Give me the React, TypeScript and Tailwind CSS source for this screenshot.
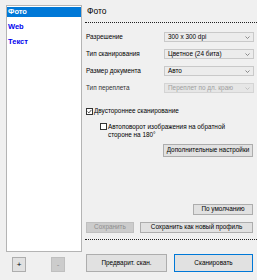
const profiles = ["Фото", "Web", "Текст"];

const settings = [
  { label: "Разрешение", value: "300 x 300 dpi", disabled: false },
  { label: "Тип сканирования", value: "Цветное (24 бита)", disabled: false },
  { label: "Размер документа", value: "Авто", disabled: false },
  { label: "Тип переплета", value: "Переплет по дл. краю", disabled: true },
];

function Chevron({ color }: { color: string }) {
  return (
    <svg width="5" height="3" viewBox="0 0 5 3" className="shrink-0">
      <path d="M0.5 0.5L2.5 2.5L4.5 0.5" fill="none" stroke={color} strokeWidth="0.8" />
    </svg>
  );
}

function Combo({ value, disabled }: { value: string; disabled: boolean }) {
  return (
    <div
      className={`w-[90px] h-[10px] flex items-center justify-between pl-[3px] pr-[3px] border ${
        disabled ? "bg-[#e6e6e6] border-[#d4d4d4] text-[#a0a0a0]" : "bg-[#ececec] border-[#c9c9c9] text-black"
      }`}
    >
      <span className="leading-none">{value}</span>
      <Chevron color={disabled ? "#b8b8b8" : "#707070"} />
    </div>
  );
}

function CheckBox({ checked }: { checked: boolean }) {
  return (
    <div className="w-[7px] h-[7px] border border-[#333] bg-white flex items-center justify-center shrink-0">
      {checked && (
        <svg width="5" height="5" viewBox="0 0 5 5">
          <path d="M0.6 2.6L1.9 3.9L4.4 0.9" fill="none" stroke="#222" strokeWidth="0.8" />
        </svg>
      )}
    </div>
  );
}

function Btn({
  children,
  className = "",
  disabled = false,
  primary = false,
}: {
  children: React.ReactNode;
  className?: string;
  disabled?: boolean;
  primary?: boolean;
}) {
  const look = disabled
    ? "bg-[#cccccc] border-[#bfbfbf] text-[#8c8c8c]"
    : primary
    ? "bg-[#e1e1e1] border-[#0078d7] text-black"
    : "bg-[#e1e1e1] border-[#adadad] text-black";
  return (
    <div className={`flex items-center justify-center border leading-none ${look} ${className}`}>
      {children}
    </div>
  );
}

function Dotted() {
  return <div className="h-0 border-t border-dotted border-[#202020]" />;
}

export default function App() {
  return (
    <div
      className="w-[257px] h-[280px] bg-[#f0f0f0] flex text-[6.4px] text-black overflow-hidden"
      style={{ fontFamily: '"Liberation Sans", Arial, sans-serif' }}
    >
      {/* profile list */}
      <div className="w-[82px] pl-[6px] pt-[5px] flex flex-col">
        <div className="h-[247px] bg-white border border-[#b4b4b4] pt-[1px]">
          {profiles.map((p, i) => (
            <div
              key={p}
              className={`h-[10px] flex items-center pl-[1px] mb-[5px] font-bold text-[7.5px] ${
                i === 0 ? "bg-[#0078d7] text-white" : "text-[#0000ee]"
              }`}
            >
              {p}
            </div>
          ))}
        </div>
        <div className="flex mt-[5px] pl-[6px] gap-[25px]">
          <Btn className="w-[14px] h-[15px] text-[8px]">+</Btn>
          <Btn className="w-[14px] h-[15px] text-[8px]" disabled>
            -
          </Btn>
        </div>
      </div>

      {/* settings */}
      <div className="flex-1 ml-[3px] flex flex-col">
        <div className="h-[22px] pl-[2px] pt-[7px] text-[8.5px] leading-none">Фото</div>
        <Dotted />

        <div className="flex flex-col gap-[7px] pt-[9px] pr-[3px]">
          {settings.map((s) => (
            <div key={s.label} className="flex items-center justify-between h-[10px] pl-[1px]">
              <span className={s.disabled ? "text-[#333]" : ""}>{s.label}</span>
              <Combo value={s.value} disabled={s.disabled} />
            </div>
          ))}
        </div>

        <div className="flex items-center gap-[1px] mt-[14px] pl-[1px] h-[8px]">
          <CheckBox checked />
          <span className="leading-none">Двустороннее сканирование</span>
        </div>

        <div className="flex items-start gap-[1px] mt-[8px] pl-[15px]">
          <CheckBox checked={false} />
          <span className="leading-[8px]">
            Автоповорот изображения на обратной
            <br />
            стороне на 180°
          </span>
        </div>

        <div className="flex justify-end pr-[4px] mt-[5px]">
          <Btn className="w-[90px] h-[13px]">Дополнительные настройки</Btn>
        </div>

        <div className="flex justify-end pr-[4px] mt-[47px]">
          <Btn className="w-[60px] h-[11px]">По умолчанию</Btn>
        </div>

        <div className="flex justify-between pl-[1px] pr-[4px] mt-[7px]">
          <Btn className="w-[48px] h-[11px]" disabled>
            Сохранить
          </Btn>
          <Btn className="w-[113px] h-[11px]">Сохранить как новый профиль</Btn>
        </div>

        <div className="mt-[6px]">
          <Dotted />
        </div>

        <div className="flex justify-between pl-[1px] pr-[4px] mt-[14px]">
          <Btn className="w-[81px] h-[18px]">Предварит. скан.</Btn>
          <Btn className="w-[79px] h-[18px]" primary>
            Сканировать
          </Btn>
        </div>
      </div>
    </div>
  );
}
